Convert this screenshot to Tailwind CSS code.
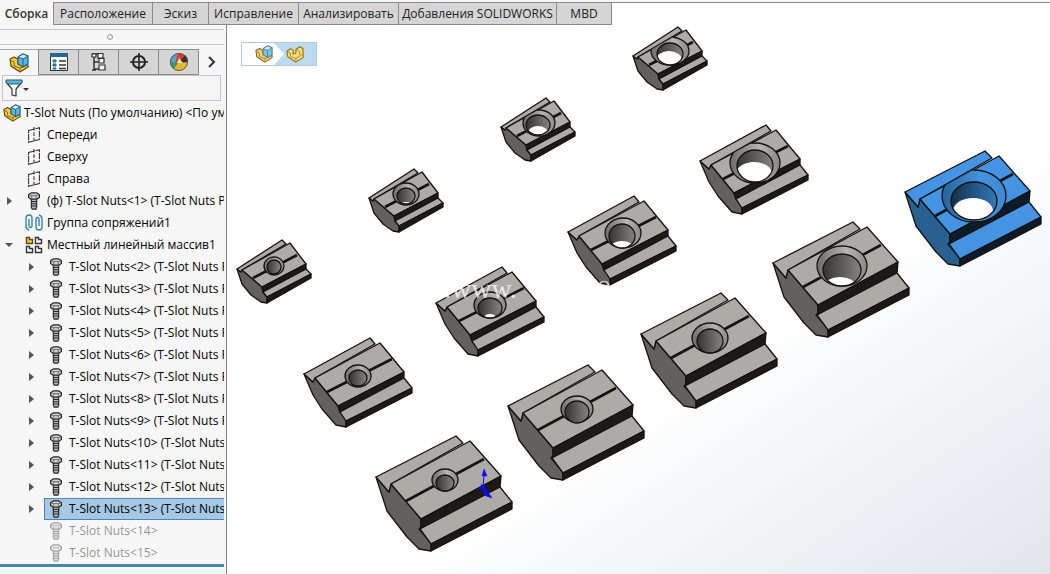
<!DOCTYPE html>
<html lang="ru">
<head>
    <meta charset="UTF-8">
    <meta name="viewport" content="width=device-width, initial-scale=1.0">
    <title>T-Slot Nuts</title>
    <script src="https://cdn.jsdelivr.net/npm/@tailwindcss/browser@4"></script>
</head>
<body class="flex h-screen flex-col overflow-hidden bg-white font-['Open_Sans','Noto_Sans',sans-serif] text-[12px] leading-[16px] text-[#222]">

<!-- icons -->
<svg class="hidden">
    <symbol id="part" viewBox="0 0 20 20">
        <path d="M1 7l4-3 3 2v4l3-1V5l4-3 4 2v10l-8 5-9-6z" fill="#f8dc75" stroke="#8b7020" stroke-width="1.2" stroke-linejoin="round"/>
        <path d="M1 7l4 2v4l6 2 8-5M11 15v4M11 5l4 2v4" fill="none" stroke="#a8862b"/>
    </symbol>
    <symbol id="assembly" viewBox="0 0 20 20">
        <path d="M1 6l4-2 4 2v4l3-1 7 3v2l-8 5-9-6z" fill="#f8cb35" stroke="#54430f" stroke-width="1.2" stroke-linejoin="round"/>
        <path d="M1 7l4 2v4l6 2 8-3M11 15v4" fill="none" stroke="#8a6a10"/>
        <path d="M9 4l5-3 5 2v8l-5 3-5-3z" fill="#5fb4e0" stroke="#215d85" stroke-width="1.2" stroke-linejoin="round"/>
        <path d="M9 4l5 2 5-3-5-2z" fill="#c9e9f8" stroke="#215d85"/>
        <path d="M14 6v8" stroke="#215d85"/>
    </symbol>
    <symbol id="props" viewBox="0 0 20 20">
        <rect x="1.500" y="1.500" width="17" height="17" fill="#fff" stroke="#333"/>
        <path d="M1 1h18v4H1z" fill="#1f6b94"/>
        <path d="M4 8h3v2H4zM4 12h3v2H4zM4 16h3v1H4z" fill="#3f9bc8" stroke="#1f6b94"/>
        <path d="M10 9h7M10 13h7M10 16.500h7" stroke="#333" stroke-width="1.300"/>
    </symbol>
    <symbol id="config" viewBox="0 0 20 20">
        <path d="M3 2h7M5 2v16M3 18h4M5 10h5M5 17h5" fill="none" stroke="#333" stroke-width="1.500"/>
        <path d="M3 2h4v3H3zM9 1.500h5v5H9zM10 6h5v5h-5zM10 13h6v5h-6z" fill="#f2f2f2" stroke="#333" stroke-width="1.200"/>
    </symbol>
    <symbol id="target" viewBox="0 0 20 20">
        <circle cx="10" cy="10" r="6" fill="none" stroke="#222" stroke-width="2"/>
        <path d="M10 1v18M1 10h18" stroke="#222" stroke-width="1.600"/>
    </symbol>
    <symbol id="ball" viewBox="0 0 20 20">
        <circle cx="10" cy="10" r="9" fill="#e8b62c"/>
        <path d="M10 10L3 4.500A9 9 0 0 0 4.500 17z" fill="#2ba15b"/>
        <path d="M9 11L1 10A9 9 0 0 1 8 1.200z" fill="#5f9fe0"/>
        <path d="M6 11L9 1a9 9 0 0 1 9.800 8z" fill="#d93a2b"/>
        <path d="M10 11l9-1a9 9 0 0 0-3-7z" fill="#313131"/>
        <path d="M10 6l4 5H8z" fill="#f9e7b0"/>
        <circle cx="10" cy="10" r="8.500" fill="none" stroke="#555"/>
    </symbol>
    <symbol id="funnel" viewBox="0 0 18 18">
        <path d="M1 3l6 7v6l4 1v-7l6-7z" fill="#fff" stroke="#333" stroke-width="1.200" stroke-linejoin="round"/>
        <path d="M1 1h16v2l-2 2H3L1 3z" fill="#5fb0d2" stroke="#1e5f80"/>
    </symbol>
    <symbol id="plane" viewBox="0 0 16 20">
        <path d="M2 5l12-3v13L2 18z" fill="none" stroke="#333" stroke-width="1.200" stroke-dasharray="7 1"/>
        <path d="M8 1v17" stroke="#333" stroke-width="1.200" stroke-dasharray="4 2"/>
    </symbol>
    <symbol id="bolt" viewBox="0 0 14 20">
        <path d="M4 6h6v11l-1 2H5l-1-2z" fill="#bbb" stroke="#222" stroke-width="1.200"/>
        <path d="M4 10.500h6M4 13h6M4 15.500h6" stroke="#222" stroke-width="1.200"/>
        <path d="M1 3l3-2h6l3 2v3l-3 2H4L1 6z" fill="#d4d4d4" stroke="#222" stroke-width="1.300" stroke-linejoin="round"/>
        <path d="M2 4h10M4.500 4.500v3M9.500 4.500v3" stroke="#666"/>
    </symbol>
    <symbol id="mates" viewBox="0 0 18 18">
        <path d="M4 5v7a1.500 1.500 0 0 0 3 0V4a3 3 0 0 0-6 0v8a4 4 0 0 0 3 4M14 12V5a1.500 1.500 0 0 0-3 0v8a3 3 0 0 0 6 0V5a4 4 0 0 0-3-4" fill="none" stroke="#3685ad" stroke-width="1.400"/>
    </symbol>
    <symbol id="pattern" viewBox="0 0 18 18">
        <path d="M1.500 1.500h3v2h3v4h-6z" fill="#f5c93e" stroke="#5b4713" stroke-width="1.400"/>
        <path d="M10.500 1.500h3v2h3v4h-6zM1.500 10.500h3v2h3v4h-6zM10.500 10.500h3v2h3v4h-6z" fill="#fff" stroke="#333" stroke-width="1.400"/>
    </symbol>
</svg>

<!-- command tabs -->
<nav class="flex h-[25px] shrink-0 border-t-2 border-[#f6f6f6] bg-white">
    <div class="flex border-b border-[#8a8a8a] bg-[#d5d5d5]">
        <button class="-mb-px w-[53px] bg-[#f7f7f7] font-semibold text-[#333]">Сборка</button>
        <button class="w-[99px] border-t border-l border-[#8a8a8a]">Расположение</button>
        <button class="w-[56px] border-t border-l border-[#8a8a8a]">Эскиз</button>
        <button class="w-[90px] border-t border-l border-[#8a8a8a]">Исправление</button>
        <button class="w-[100px] border-t border-l border-[#8a8a8a]">Анализировать</button>
        <button class="w-[158px] border-t border-l border-[#8a8a8a] whitespace-nowrap">Добавления SOLIDWORKS</button>
        <button class="w-[56px] border-t border-x border-[#8a8a8a]">MBD</button>
    </div>
    <div class="flex-1 border-t border-[#8a8a8a]"></div>
</nav>

<div class="flex min-h-0 flex-1">
    <!-- feature tree -->
    <aside class="flex w-[227px] shrink-0 flex-col border-r border-[#858585] bg-[#f7f7f7] pr-[2px]">
        <div class="mt-1 flex h-4 items-center border-y border-[#c6c6c6]">
            <span class="ml-[107px] size-[6px] rounded-full border border-[#999]"></span>
        </div>
        <div class="mt-1 flex h-[26px]">
            <button class="flex w-[38px] items-center justify-center border-t border-[#aaa]"><svg class="size-5"><use href="#assembly"/></svg></button>
            <button class="flex w-10 items-center justify-center border border-r-0 border-[#8a8a8a] bg-[#d5d5d5]"><svg class="size-5"><use href="#props"/></svg></button>
            <button class="flex w-10 items-center justify-center border border-r-0 border-[#8a8a8a] bg-[#d5d5d5]"><svg class="size-5"><use href="#config"/></svg></button>
            <button class="flex w-10 items-center justify-center border border-r-0 border-[#8a8a8a] bg-[#d5d5d5]"><svg class="size-5"><use href="#target"/></svg></button>
            <button class="flex w-[41px] items-center justify-center border border-[#8a8a8a] bg-[#d5d5d5]"><svg class="size-5"><use href="#ball"/></svg></button>
            <button class="flex flex-1 items-center justify-end pr-2"><svg class="h-3 w-2" viewBox="0 0 8 12"><path d="M1 1l5 5-5 5" fill="none" stroke="#333" stroke-width="2"/></svg></button>
        </div>
        <label class="mr-[3px] mb-px ml-[2px] flex h-[26px] items-center border border-[#c4c4cc] pl-[2px]">
            <svg class="size-[18px]"><use href="#funnel"/></svg>
            <svg class="h-2 w-[6px]" viewBox="0 0 6 8"><path d="M0 4h6L3 7z" fill="#333"/></svg>
            <input type="text" aria-label="Фильтр" class="min-w-0 flex-1 bg-transparent outline-none">
        </label>
        <ul id="tree" class="text-black"></ul>
        <div class="h-[3px] shrink-0 bg-[#4387ad]"></div>
        <div class="h-[2px] shrink-0 bg-[#fffbe6]"></div>
        <div class="flex-1 bg-[#e6fbfd]"></div>
    </aside>

    <!-- viewport -->
    <main class="relative min-w-0 flex-1 bg-linear-to-br from-white from-60% to-[#e2e5ec]">
        <svg id="scene" class="h-full w-full" viewBox="227 25 823 549" preserveAspectRatio="xMinYMin meet">
            <defs>
                <linearGradient id="bore"><stop offset="0" stop-color="#353433"/><stop offset="1" stop-color="#86837f"/></linearGradient>
                <linearGradient id="boreBlue"><stop offset="0" stop-color="#12304c"/><stop offset="1" stop-color="#3478b8"/></linearGradient>
                <linearGradient id="sink"><stop offset="0" stop-color="#6e6b68"/><stop offset=".6" stop-color="#b8b5b1"/><stop offset="1" stop-color="#8b8884"/></linearGradient>
                <linearGradient id="sinkBlue"><stop offset="0" stop-color="#286298"/><stop offset=".6" stop-color="#4593df"/><stop offset="1" stop-color="#3e88d0"/></linearGradient>
            </defs>
            <g id="nuts"></g>
            <g fill="#fff" fill-opacity=".75" font-family="Liberation Serif, serif" font-size="28">
                <text x="444" y="298">.www.</text>
                <text x="597" y="294">o</text>
            </g>
            <g fill="#0b0bf0" stroke="#0b0bf0">
                <path d="M483 488l1-13" fill="none"/>
                <path d="M484 469l3 7h-5zM480 487l4-1 8 12-6-2z" stroke-width=".5"/>
                <path d="M477 490l8-5M481 484l4 8" fill="none"/>
            </g>
        </svg>
        <div class="absolute top-[17px] left-[14px] flex h-6 w-[76px] border border-[#b5cbdd] bg-white">
            <button class="flex w-8 items-center justify-end pr-px" aria-label="Сборка"><svg class="size-[18px] opacity-80"><use href="#assembly"/></svg></button>
            <button class="flex flex-1 items-center justify-center bg-[#bedaee] [clip-path:polygon(0_0,100%_0,100%_100%,0_100%,10px_50%)]" aria-label="Деталь"><svg class="size-[18px]"><use href="#part"/></svg></button>
        </div>
    </main>
</div>

<script>
    // icon, label, level, arrow, state
    const rows = [
        ['assembly', 'T-Slot Nuts (По умолчанию) <По ум', 0, ''],
        ['plane', 'Спереди', 1, ''],
        ['plane', 'Сверху', 1, ''],
        ['plane', 'Справа', 1, ''],
        ['bolt', '(ф) T-Slot Nuts<1> (T-Slot Nuts P', 1, 'right'],
        ['mates', 'Группа сопряжений1', 1, ''],
        ['pattern', 'Местный линейный массив1', 1, 'down'],
    ];
    for (let i = 2; i <= 13; i++) {
        rows.push(['bolt', `T-Slot Nuts<${i}> (T-Slot Nuts${i < 10 ? ' P' : ''}`, 2, 'right', i === 13 ? 'selected' : '']);
    }
    rows.push(['bolt', 'T-Slot Nuts<14>', 2, '', 'hidden'], ['bolt', 'T-Slot Nuts<15>', 2, '', 'hidden']);

    const indent = ['w-0', 'w-[22px]', 'w-[44px]'];
    const arrows = {
        '': '',
        right: '<svg class="mr-[10px] h-2 w-[5px]" viewBox="0 0 5 8"><path d="M0 0l5 4-5 4z" fill="#555"/></svg>',
        down: '<svg class="mr-[9px] h-2 w-2" viewBox="0 0 8 8"><path d="M0 2h8L4 6z" fill="#555"/></svg>',
    };

    document.getElementById('tree').innerHTML = rows.map(([icon, label, level, arrow, state]) => {
        const text = label.replace(/</g, '&lt;').replace(/>/g, '&gt;');
        const look = state === 'selected' ? 'border-[#4f86b5] bg-[#a5c8e4]' : 'border-transparent';
        const faded = state === 'hidden' ? 'opacity-40' : '';
        const gap = level === 0 ? 'mr-px' : 'mr-[2px]';
        return `<li class="flex h-[22px] items-center overflow-hidden">
            <span class="${indent[level]} flex shrink-0 justify-end">${arrows[arrow]}</span>
            <div class="flex h-full min-w-0 flex-1 items-center overflow-hidden border border-r-0 ${look}">
                <svg class="${gap} ${faded} h-[18px] w-[22px] shrink-0"><use href="#${icon}"/></svg>
                <span class="${faded} whitespace-nowrap">${text}</span>
            </div>
        </li>`;
    }).join('');

    // faces of the nut for each profile size
    const profiles = {
        S: {
            end: '13,41 17,44 18,42 38,59 39,64 43,69 43,75 37,74 27,67 18,56',
            strip: '13,41 58,12 62,16 18,42 17,44', ridge: '18,42 66,15 82,36 38,59',
            side: '38,59 82,36 82,41 39,64', flange: '39,64 82,41 87,46 43,69', front: '43,69 87,46 87,50 43,75',
            slot: [29, 50, 73, 27], edge: '18,42 66,15 110,30 110,90 20,90',
        },
        M: {
            end: '10,46 19,54 21,50 44,78 46,84 52,92 52,99 42,97 28,81 19,67',
            strip: '10,46 76,10 81,16 21,50 19,54', ridge: '21,50 86,15 110,44 44,78',
            side: '44,78 110,44 110,50 46,84', flange: '46,84 110,50 118,60 52,93', front: '52,93 118,60 118,65 52,99',
            slot: [33, 64, 98, 31], edge: '21,50 86,15 130,30 130,110 20,110',
        },
        L: {
            end: '7,53 20,68 22,60 52,95 52,103 50,105 62,119 62,127 50,125 38,113 18,87',
            strip: '7,53 87,12 94,19 22,60 20,68', ridge: '22,60 101,17 132,52 52,95',
            side: '52,95 132,52 131,63 52,105', flange: '51,105 131,63 143,78 62,120', front: '62,120 143,78 143,85 62,127',
            slot: [37, 77, 115, 35], edge: '22,60 101,17 150,30 150,130 20,130',
        },
    };

    // profile, x, y, countersink [cx, cy, rx, ry], bore [cx, cy, rx, ry], visible background [dx, dy, rx, ry]
    const nuts = [
        ['S', 224, 228, [50, 38, 10, 9], [50, 39, 7, 7], null],
        ['S', 356, 157, [50, 37, 13, 11], [50, 39, 9, 8], [0, 11, 7, 5]],
        ['S', 488, 86, [51, 37, 16, 13], [50, 39, 12, 10], [0, 8, 10, 7]],
        ['S', 620, 15, [50, 36, 19, 14], [50, 39, 13, 11], [-1, 6, 13, 9]],
        ['M', 294, 328, [64, 48, 13, 11], [64, 50, 9, 8], null],
        ['M', 426, 257, [64, 48, 16, 13], [64, 51, 12, 10], [0, 11, 7, 5]],
        ['M', 558, 186, [65, 47, 18, 15], [64, 50, 13, 12], [0, 12, 12, 7]],
        ['M', 690, 115, [65, 48, 25, 20], [65, 51, 18, 16], [-1, 8, 18, 12]],
        ['L', 369, 424, [76, 56, 13, 11], [76, 59, 9, 8], null],
        ['L', 501, 353, [76, 56, 16, 13], [76, 59, 12, 11], null],
        ['L', 634, 281, [76, 57, 18, 15], [76, 60, 13, 12], null],
        ['L', 766, 210, [76, 56, 25, 20], [76, 60, 19, 16], [-2, 16, 16, 9]],
        ['L', 898, 139, [76, 57, 32, 26], [76, 62, 23, 19], [-1, 10, 20, 13]],
    ];

    const ellipse = (e, attrs) => `<ellipse cx="${e[0]}" cy="${e[1]}" rx="${e[2]}" ry="${e[3]}" ${attrs}/>`;

    document.getElementById('nuts').innerHTML = nuts.map(([size, x, y, sink, bore, hole], i) => {
        const p = profiles[size];
        const blue = i === nuts.length - 1;
        const top = blue ? '#4593e3' : '#aeaba7';
        const end = blue ? '#28618f' : '#62615d';
        const dark = blue ? '#0d1a28' : '#1d1916';
        const [x1, y1, x2, y2] = p.slot;
        const through = hole ? ellipse([bore[0] + hole[0], bore[1] + hole[1], hole[2], hole[3]], `fill="#fff" clip-path="url(#bore${i})"`) : '';
        return `<g transform="translate(${x} ${y})" stroke="#15120f" stroke-width="1.3" stroke-linejoin="round">
            <clipPath id="edge${i}"><polygon points="${p.edge}"/></clipPath>
            <clipPath id="bore${i}">${ellipse(bore, '')}</clipPath>
            <polygon points="${p.end}" fill="${end}"/>
            <polygon points="${p.strip}" fill="${top}"/>
            <polygon points="${p.ridge}" fill="${top}"/>
            <polygon points="${p.side}" fill="${dark}"/>
            <polygon points="${p.flange}" fill="${top}"/>
            <polygon points="${p.front}" fill="${dark}"/>
            <line x1="${x1}" y1="${y1}" x2="${x2}" y2="${y2}" stroke-width="2.6"/>
            <g clip-path="url(#edge${i})">${ellipse(sink, `fill="url(#${blue ? 'sinkBlue' : 'sink'})"`)}</g>
            <g stroke="none">${ellipse(bore, `fill="url(#${blue ? 'boreBlue' : 'bore'})"`)}${through}</g>
            ${ellipse(bore, 'fill="none"')}
        </g>`;
    }).join('');
</script>
</body>
</html>
